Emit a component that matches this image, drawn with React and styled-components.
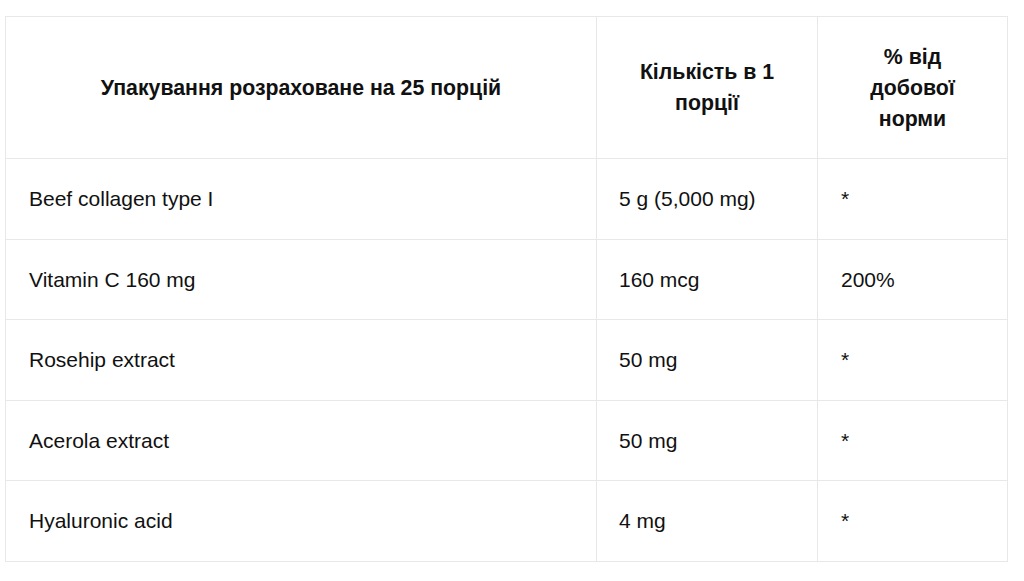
import React from "react";
import styled, { createGlobalStyle } from "styled-components";

const GlobalStyle = createGlobalStyle`
  body {
    margin: 0;
    background: #fff;
    font-family: "Liberation Sans", Arial, Helvetica, sans-serif;
    color: #111;
  }
`;

const rows = [
  ["Beef collagen type I", "5 g (5,000 mg)", "*"],
  ["Vitamin C 160 mg", "160 mcg", "200%"],
  ["Rosehip extract", "50 mg", "*"],
  ["Acerola extract", "50 mg", "*"],
  ["Hyaluronic acid", "4 mg", "*"],
];

const App = () => {
  return (
    <>
      <GlobalStyle />
      <Wrapper>
        <Table>
          <colgroup>
            <col style={{ width: 591 }} />
            <col style={{ width: 221 }} />
            <col style={{ width: 190 }} />
          </colgroup>
          <thead>
            <tr>
              <Th>Упакування розраховане на 25 порцій</Th>
              <Th>
                Кількість в 1
                <br />
                порції
              </Th>
              <Th>
                % від
                <br />
                добової
                <br />
                норми
              </Th>
            </tr>
          </thead>
          <tbody>
            {rows.map((row) => (
              <tr key={row[0]}>
                <Td>{row[0]}</Td>
                <Td $narrow>{row[1]}</Td>
                <Td>{row[2]}</Td>
              </tr>
            ))}
          </tbody>
        </Table>
      </Wrapper>
    </>
  );
};

export default App;

const Wrapper = styled.div`
  padding: 16px 17px 0 5px;
`;

const Table = styled.table`
  width: 1002px;
  border-collapse: collapse;
  table-layout: fixed;
  font-size: 21px;
  line-height: 30.5px;
`;

const Th = styled.th`
  border: 1px solid #e8e8e8;
  padding: 24.5px 22px 23.5px;
  font-size: 21.3px;
  line-height: 31px;
  font-weight: 700;
  text-align: center;
  vertical-align: middle;
  color: #111;
`;

const Td = styled.td`
  border: 1px solid #e8e8e8;
  padding: 25px ${(p) => (p.$narrow ? "22px" : "23px")} 24px;
  font-weight: 400;
  text-align: left;
  vertical-align: middle;
  color: #111;
`;
